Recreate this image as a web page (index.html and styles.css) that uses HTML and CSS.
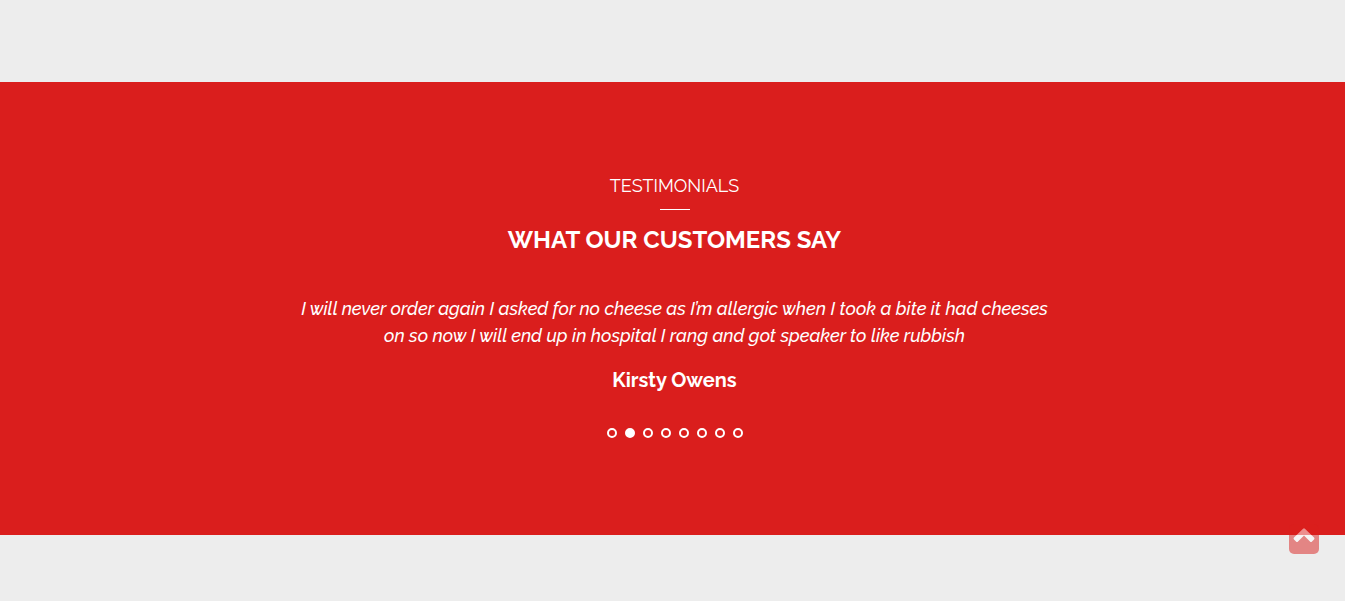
FILE: index.html
```html
<!DOCTYPE html>
<html lang="en">
<head>
<meta charset="utf-8">
<meta name="viewport" content="width=device-width, initial-scale=1">
<title>Testimonials</title>
<link rel="stylesheet" href="styles.css">
</head>
<body>
<main class="page">
  <section class="testimonials">
    <header class="heading">
      <p class="eyebrow">TESTIMONIALS</p>
      <h2 class="title">WHAT OUR CUSTOMERS SAY</h2>
    </header>
    <figure class="slide">
      <blockquote class="quote">I will never order again I asked for no cheese as I’m allergic when I took a bite it had cheeses on so now I will end up in hospital I rang and got speaker to like rubbish</blockquote>
      <figcaption class="author">Kirsty Owens</figcaption>
    </figure>
    <nav class="dots" aria-label="Testimonials">
      <button class="dot" type="button" aria-label="Testimonial 1"></button>
      <button class="dot active" type="button" aria-label="Testimonial 2"></button>
      <button class="dot" type="button" aria-label="Testimonial 3"></button>
      <button class="dot" type="button" aria-label="Testimonial 4"></button>
      <button class="dot" type="button" aria-label="Testimonial 5"></button>
      <button class="dot" type="button" aria-label="Testimonial 6"></button>
      <button class="dot" type="button" aria-label="Testimonial 7"></button>
      <button class="dot" type="button" aria-label="Testimonial 8"></button>
    </nav>
  </section>
</main>
<a class="to-top" href="#" aria-label="Back to top">
  <svg viewBox="0 0 30 30" width="30" height="30" aria-hidden="true"><rect class="plate" width="30" height="30" rx="5"/><path class="chevron" d="M14.1 4.7Q15 3.8 15.9 4.7L25 13.4Q26 14.4 25 15.4L23 17.4Q22 18.4 21 17.4L15 11.6L9 17.4Q8 18.4 7 17.4L5 15.4Q4 14.4 5 13.4Z"/></svg>
</a>
</body>
</html>
```

FILE: styles.css
```css
* { box-sizing: border-box; }
body {
  margin: 0;
  background: #ededed;
  color: #fff;
  font-family: Raleway, Lato, "Open Sans", sans-serif;
}
.page { padding: 82px 0 66px; }
.testimonials {
  padding: 90px 16px 97px 20px;
  background: #da1e1d;
  text-align: center;
}
.eyebrow { margin: 0; font-size: 18px; line-height: 28px; }
.eyebrow::after {
  content: "";
  display: block;
  width: 30px;
  height: 1px;
  margin: 9px auto 0;
  background: #fff;
}
.title { margin: 12px 0 0; font-size: 24px; line-height: 36px; }
.slide { max-width: 768px; margin: 37px auto 0; }
.quote { margin: 0; font-size: 18px; font-weight: 500; font-style: italic; line-height: 27px; }
.author { margin-top: 16px; font-size: 20px; font-weight: 700; line-height: 30px; }
.dots { display: flex; justify-content: center; gap: 8px; margin-top: 33px; }
.dot {
  width: 10px;
  height: 10px;
  padding: 0;
  border: 2px solid #fff;
  border-radius: 50%;
  background: transparent;
}
.dot.active { background: #fff; }
.to-top { position: fixed; right: 26px; bottom: 47px; opacity: .5; }
.to-top svg { display: block; }
.plate { fill: #da1e1d; }
.chevron { fill: #fff; }
```
